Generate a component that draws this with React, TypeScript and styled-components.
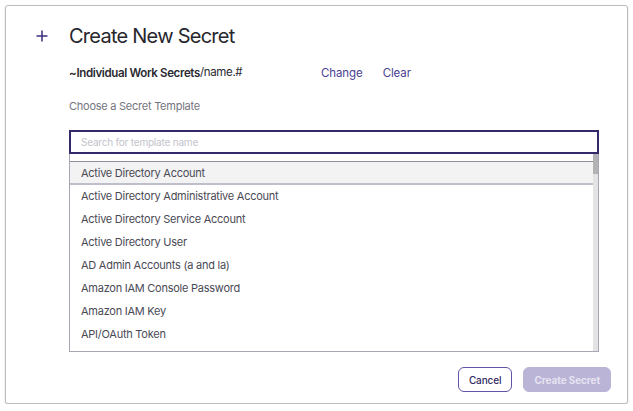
import styled, { createGlobalStyle } from "styled-components";

const GlobalStyle = createGlobalStyle`
  html, body {
    margin: 0;
    padding: 0;
    background: #ffffff;
  }

  body {
    font-family: Inter, "Noto Sans", "Liberation Sans", sans-serif;
    color: #2b2b33;
  }
`;

// only the rows that fit in the visible part of the list
const templates = [
  "Active Directory Account",
  "Active Directory Administrative Account",
  "Active Directory Service Account",
  "Active Directory User",
  "AD Admin Accounts (a and la)",
  "Amazon IAM Console Password",
  "Amazon IAM Key",
  "API/OAuth Token",
];

const Dialog = styled.div`
  box-sizing: border-box;
  margin: 5px 0 0 5px;
  width: 623px;
  height: 399px;
  border: 1px solid #bdbdbd;
  border-radius: 3px;
  box-shadow: 0 1px 2px rgba(0, 0, 0, 0.18);
  background: #ffffff;
  padding: 15px 27px 0 29px;
  display: flex;
  flex-direction: column;
`;

const Header = styled.div`
  display: flex;
  align-items: center;
  height: 30px;
`;

const IconBox = styled.div`
  width: 34px;
  display: flex;
  align-items: center;
  color: #3a2f7d;
`;

const Title = styled.h1`
  margin: 0;
  font-size: 20px;
  font-weight: 400;
  letter-spacing: -0.75px;
  color: #26262c;
`;

const Body = styled.div`
  margin-left: 34px;
  display: flex;
  flex-direction: column;
`;

const PathRow = styled.div`
  margin-top: 13px;
  height: 18px;
  display: flex;
  align-items: center;
`;

const Path = styled.div`
  width: 252px;
  font-size: 11.5px;
  font-weight: 600;
  letter-spacing: -0.35px;
  color: #2a2a30;
`;

const PathTail = styled.span`
  font-weight: 400;
  position: relative;
  top: -1px;
`;

const LinkButton = styled.button`
  border: none;
  background: none;
  padding: 0;
  margin-right: 20px;
  font-family: inherit;
  font-size: 11.5px;
  letter-spacing: -0.1px;
  color: #4b3f92;
  cursor: pointer;
`;

const Label = styled.div`
  margin-top: 16px;
  height: 16px;
  line-height: 16px;
  font-size: 11px;
  letter-spacing: -0.25px;
  color: #74747e;
`;

const Search = styled.input`
  box-sizing: border-box;
  margin-top: 16px;
  width: 530px;
  height: 24px;
  border: 2px solid #332a6b;
  padding: 0 10px;
  font-family: inherit;
  font-size: 10px;
  letter-spacing: -0.2px;
  outline: none;

  &::placeholder {
    color: #c3c3cb;
  }
`;

const ListBox = styled.div`
  box-sizing: border-box;
  width: 530px;
  height: 198px;
  border: 1px solid #a6a6b4;
  border-top: none;
  display: flex;
`;

const List = styled.ul`
  flex: 1;
  list-style: none;
  margin: 0;
  padding: 7px 0 0;
  overflow: hidden;
`;

const Item = styled.li<{ active?: boolean }>`
  box-sizing: border-box;
  height: ${(p) => (p.active ? "24px" : "23px")};
  line-height: ${(p) => (p.active ? "22px" : "23px")};
  padding-left: 11px;
  font-size: 11px;
  letter-spacing: -0.25px;
  color: #4a4a55;
  background: ${(p) => (p.active ? "#f3f3f3" : "transparent")};
  border-top: ${(p) => (p.active ? "1px solid #8e8e9e" : "none")};
  border-bottom: ${(p) => (p.active ? "2px solid #bebecd" : "none")};
  white-space: nowrap;
`;

const ScrollTrack = styled.div`
  width: 5px;
  background: #e3e3e3;
  display: flex;
  flex-direction: column;
`;

const ScrollThumb = styled.div`
  height: 20px;
  background: #b3b3b3;
`;

const Footer = styled.div`
  margin: 15px -11px 0 0;
  display: flex;
  justify-content: flex-end;
  gap: 11px;
`;

const Button = styled.button<{ primary?: boolean }>`
  box-sizing: border-box;
  height: 25px;
  padding: 0 10px;
  border-radius: 6px;
  font-family: inherit;
  font-size: 10px;
  letter-spacing: -0.1px;
  font-weight: ${(p) => (p.primary ? 700 : 500)};
  border: 1px solid ${(p) => (p.primary ? "#bab4d6" : "#6253a6")};
  background: ${(p) => (p.primary ? "#bab4d6" : "#ffffff")};
  color: ${(p) => (p.primary ? "#e6e3f2" : "#2f2a5e")};
`;

export default function App() {
  return (
    <>
      <GlobalStyle />
      <Dialog>
        <Header>
          <IconBox>
            <svg width="14" height="14" viewBox="0 0 14 14">
              <path
                d="M7 1.5v11M1.5 7h11"
                stroke="currentColor"
                strokeWidth="1.5"
                fill="none"
              />
            </svg>
          </IconBox>
          <Title>Create New Secret</Title>
        </Header>
        <Body>
          <PathRow>
            <Path>
              ~Individual Work Secrets<PathTail>/name.#</PathTail>
            </Path>
            <LinkButton>Change</LinkButton>
            <LinkButton>Clear</LinkButton>
          </PathRow>
          <Label>Choose a Secret Template</Label>
          <Search placeholder="Search for template name" />
          <ListBox>
            <List>
              {templates.map((name, i) => (
                <Item key={name} active={i === 0}>
                  {name}
                </Item>
              ))}
            </List>
            <ScrollTrack>
              <ScrollThumb />
            </ScrollTrack>
          </ListBox>
        </Body>
        <Footer>
          <Button>Cancel</Button>
          <Button primary>Create Secret</Button>
        </Footer>
      </Dialog>
    </>
  );
}
